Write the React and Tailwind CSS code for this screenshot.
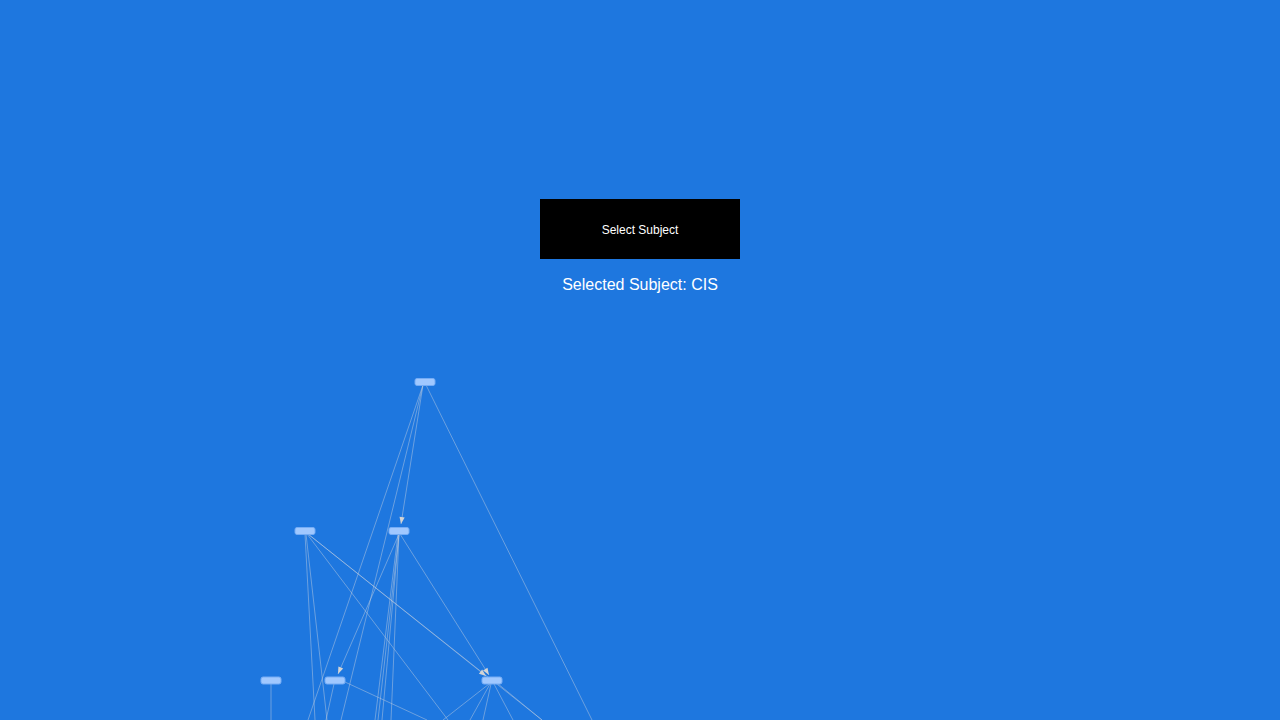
import React, { useState } from 'react';

// graph drawn in page coordinates; svg starts at y = 310
const nodes = [
  { id: 'A', x: 425, y: 382 },
  { id: 'B', x: 305, y: 531 },
  { id: 'C', x: 399, y: 531 },
  { id: 'D', x: 271, y: 680.5 },
  { id: 'E', x: 335, y: 680.5 },
  { id: 'F', x: 492, y: 680.5 },
];

const edges = [
  // from A
  [423, 385, 401, 524, true],
  [423, 385, 308, 720],
  [423, 385, 341, 720],
  [426, 385, 592, 720],
  // from B
  [305, 534, 315, 720],
  [306, 534, 327, 720],
  [307, 534, 448, 720],
  [308, 534, 486, 676, true],
  [308, 534, 542, 720],
  // from C
  [399, 534, 338, 674, true],
  [398, 534, 375, 720],
  [399, 534, 378, 720],
  [399, 534, 382, 720],
  [399, 534, 391, 720],
  [400, 534, 489, 675, true],
  // from D, E, F
  [271, 684, 271, 720],
  [334, 684, 326, 720],
  [345, 682, 427, 720],
  [489, 684, 443, 720],
  [490, 684, 470, 720],
  [491, 684, 483, 720],
  [494, 684, 513, 720],
  [497, 683, 542, 720],
];

const Arrow = ({ x1, y1, x2, y2 }) => {
  // small triangle pointing along the edge, tip at (x2, y2)
  const a = Math.atan2(y2 - y1, x2 - x1);
  const len = 7;
  const w = 2.6;
  const bx = x2 - Math.cos(a) * len;
  const by = y2 - Math.sin(a) * len;
  const px = -Math.sin(a) * w;
  const py = Math.cos(a) * w;
  return (
    <polygon
      points={`${x2},${y2} ${bx + px},${by + py} ${bx - px},${by - py}`}
      fill="#d4d4d4"
    />
  );
};

const SubjectGraph = () => (
  <svg width="1280" height="410" viewBox="0 310 1280 410" className="block">
    {edges.map(([x1, y1, x2, y2, arrow], i) => (
      <g key={i}>
        <line x1={x1} y1={y1} x2={x2} y2={y2} stroke="#c9d3e0" strokeOpacity="0.45" strokeWidth="1" />
        {arrow && <Arrow x1={x1} y1={y1} x2={x2} y2={y2} />}
      </g>
    ))}
    {nodes.map((n) => (
      <rect
        key={n.id}
        x={n.x - 10}
        y={n.y - 3.5}
        width="20"
        height="7"
        rx="2"
        fill="#a0c8ff"
        stroke="#74acf5"
        strokeWidth="1"
      />
    ))}
  </svg>
);

const App = () => {
  const [subject] = useState('CIS');

  return (
    <div
      className="h-screen w-full overflow-hidden bg-[#1e77df] flex flex-col items-center"
      style={{ fontFamily: '"Liberation Sans", Arial, sans-serif' }}
    >
      <div className="pt-[199px] flex flex-col items-center">
        <button className="w-[200px] h-[60px] pt-[2px] bg-black text-white text-[12px]">
          Select Subject
        </button>
        <p className="mt-[17px] mb-4 text-white text-[16px] leading-[normal]">
          Selected Subject: {subject}
        </p>
      </div>

      {/* prerequisite graph */}
      <SubjectGraph />
    </div>
  );
};

export default App;
